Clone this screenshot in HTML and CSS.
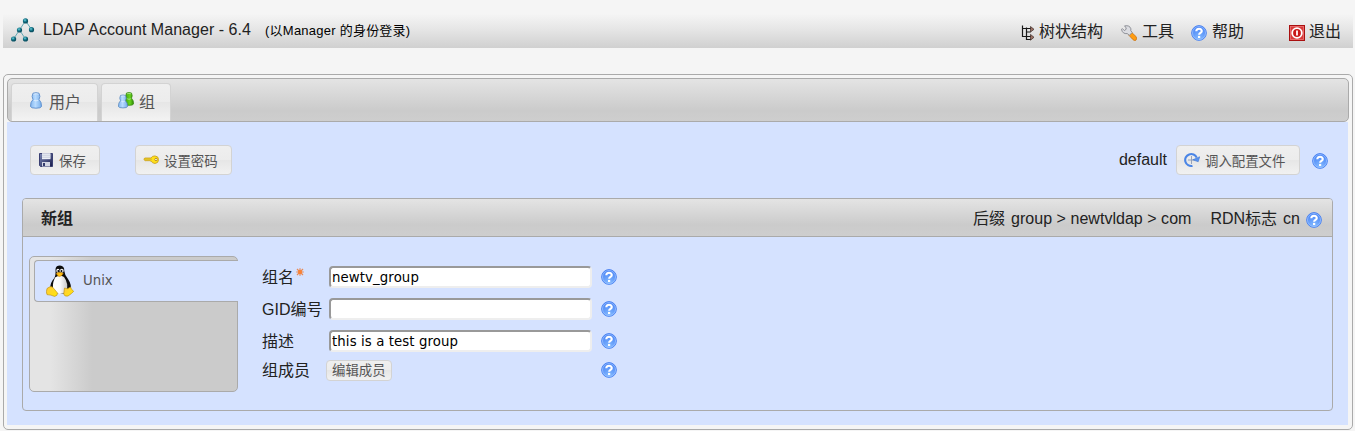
FILE: index.html
```html
<!DOCTYPE html>
<html lang="zh-CN">
<head>
<meta charset="utf-8">
<title>LDAP Account Manager</title>
<link rel="stylesheet" href="styles.css">
</head>
<body>
<svg class="defs" aria-hidden="true">
  <defs>
    <radialGradient id="blueBall" cx="50%" cy="90%" r="85%"><stop offset="0" stop-color="#86bcff"/><stop offset="1" stop-color="#4681f5"/></radialGradient>
    <linearGradient id="bluePawn" x2="1"><stop offset="0" stop-color="#84b7ef"/><stop offset=".45" stop-color="#b8dbff"/><stop offset="1" stop-color="#77aeea"/></linearGradient>
    <linearGradient id="greenPawn" x2="1"><stop offset="0" stop-color="#3f9d0c"/><stop offset=".6" stop-color="#67d51d"/><stop offset="1" stop-color="#318a08"/></linearGradient>
    <radialGradient id="teal" cx="40%" cy="35%"><stop offset="0" stop-color="#7fd0dc"/><stop offset=".5" stop-color="#1d8799"/><stop offset="1" stop-color="#0b5264"/></radialGradient>
    <linearGradient id="foot" y2="1"><stop offset="0" stop-color="#ffc83c"/><stop offset="1" stop-color="#ffe808"/></linearGradient>
    <linearGradient id="belly" x2="1"><stop offset="0" stop-color="#fff"/><stop offset=".5" stop-color="#fafafa"/><stop offset="1" stop-color="#c9c9c9"/></linearGradient>
    <linearGradient id="disk" x2="1" y2="1"><stop offset="0" stop-color="#7b87b4"/><stop offset="1" stop-color="#181b4c"/></linearGradient>
  </defs>
  <symbol id="help" viewBox="0 0 16 16">
    <circle cx="8" cy="8" r="7.4" fill="url(#blueBall)" stroke="#3f7af0" stroke-width=".8"/>
    <circle cx="8" cy="8" r="6.5" fill="none" stroke="#a5c8ff" stroke-width=".7"/>
    <path d="M5.3 6.3C5.2 2.9 10.8 2.9 10.8 6.1C10.8 8 8.2 7.9 8.1 9.8" fill="none" stroke="#fff" stroke-width="2.1"/>
    <rect x="7" y="10.9" width="2.2" height="2.1" fill="#fff"/>
  </symbol>
  <symbol id="pawn" viewBox="0 0 12 17">
    <path d="M3 1.2Q6 .2 9 1.2Q10.8 4.5 9 7.5Q11.7 10 11.5 14.5Q11 16.2 6 16.2Q1 16.2 .5 14.5Q.3 10 3 7.5Q1.2 4.5 3 1.2Z" stroke-width=".9"/>
    <path d="M3.4 2.2Q6 1.2 8.6 2.2M3.8 8.2Q6 9.6 8.2 8.2" fill="none" stroke="#fff" stroke-opacity=".55"/>
  </symbol>
</svg>

<header class="topbar">
  <svg class="logo" viewBox="0 0 24 24">
    <path d="M14.5 2.7L8.5 12L2.5 21M14.5 2.7L20.5 11.5M8.5 12L14.5 21" fill="none" stroke="#64a9b5" stroke-width="1"/>
    <g fill="url(#teal)"><circle cx="14.5" cy="2.9" r="2.6"/><circle cx="8.5" cy="12" r="2.6"/><circle cx="20.5" cy="11.7" r="2.6"/><circle cx="2.6" cy="21" r="2.6"/><circle cx="14.5" cy="21" r="2.6"/></g>
  </svg>
  <span class="product">LDAP Account Manager - 6.4</span>
  <span class="login">(以Manager 的身份登录)</span>
  <nav class="links">
    <a class="link tree"><svg viewBox="0 0 16 16">
      <path d="M2.5 .5V11.5H11M6.5 2.5V14.5H11M2 3.5H11M6.5 7H10.5" fill="none" stroke="#171717" stroke-width="1.2"/>
      <path d="M10.5 1.5L14 4.3L10.5 7.1ZM10.5 9.4L14 12.3L10.5 15.2Z" fill="#9b7063" stroke="#3a2a25" stroke-width=".7"/>
    </svg><span>树状结构</span></a>
    <a class="link tools"><svg viewBox="0 0 16 16">
      <path d="M7.5 9.8L10.2 7L15.2 11.7Q16.3 14.2 14.7 15.4Q13.1 16 11.5 14.2Z" fill="#ff9d12" stroke="#c66a07" stroke-width=".7"/>
      <path d="M3.6 .9Q8.6 -.1 9.9 3.8L9.8 5.8L11.2 7.4L8.3 10.4L6.3 8.6Q1.5 9.2 .5 4.3L1.4 3.6L3.4 5.6L5.2 4.2L5 2.8Z" fill="#dcdde2" stroke="#85878f" stroke-width=".9"/>
    </svg><span>工具</span></a>
    <a class="link help-link"><svg><use href="#help"/></svg><span>帮助</span></a>
    <a class="link exit"><svg viewBox="0 0 16 16">
      <rect x=".5" y=".5" width="15" height="15" fill="#d83a3a" stroke="#a91010"/>
      <rect x="1.5" y="1.5" width="13" height="13" fill="none" stroke="#ec7474" stroke-width=".8"/>
      <circle cx="8" cy="8" r="4.8" fill="#c91818" stroke="#fff" stroke-width="1.8"/>
      <path d="M8 5.4V10.6" stroke="#fff" stroke-width="1.8"/>
    </svg><span>退出</span></a>
  </nav>
</header>

<main class="frame">
  <div class="tabs">
    <a class="tab users"><svg class="pawn-one" fill="url(#bluePawn)" stroke="#5b8ccc"><use href="#pawn"/></svg><span>用户</span></a>
    <a class="tab groups"><svg class="pawns" viewBox="0 0 16 17">
      <use href="#pawn" x="6" y="0" width="10" height="14" fill="url(#greenPawn)" stroke="#2f850b"/>
      <use href="#pawn" x="0" y="2" width="10" height="15" fill="url(#bluePawn)" stroke="#5283bb"/>
    </svg><span>组</span></a>
  </div>

  <div class="content">
    <div class="toolbar">
      <button class="btn save"><svg viewBox="0 0 16 16">
        <path d="M1.5 1.5H14.5V14.5H2.5L1.5 13.5Z" fill="url(#disk)" stroke="#3a4072"/>
        <rect x="4" y="1.2" width="8.5" height="6" fill="#eef1f8"/><path d="M4 3.2H12.5M4 5.2H12.5" stroke="#b8bfd1" stroke-width=".7"/>
        <rect x="4" y="10" width="8" height="4.5" fill="#d3d6e3"/><rect x="5" y="11" width="2" height="3" fill="#353c6d"/>
      </svg><span>保存</span></button>
      <button class="btn password"><svg viewBox="0 0 16 16">
        <path d="M1 6.7L2 6H8Q9 3.8 12 3.9Q15.5 4.2 15.6 7.6Q15.4 11.3 12 11.5Q9.2 11.4 8.2 9H7L6 8.3L5 9L4 8.3L3 9L1 7.8Z" fill="#ffe018" stroke="#c79a18" stroke-width=".8"/>
        <path d="M2 7.2H9" stroke="#b19545" stroke-width=".6"/><circle cx="13" cy="7.5" r="1.2" fill="#fff" stroke="#a47910" stroke-width=".8"/>
      </svg><span>设置密码</span></button>
      <div class="profile">
        <span class="profile-name">default</span>
        <button class="btn load"><svg viewBox="0 0 16 16">
          <path d="M7.5 4V12M4 8H11.5" stroke="#8e9cb4" stroke-width=".9"/>
          <path d="M8.5 13.9A6 6 0 1 1 12.7 5.7" fill="none" stroke="#4a85e6" stroke-width="2.1"/>
          <path d="M8.7 7.8L15.8 4.7L14.2 9.8Z" fill="#5792f0" stroke="#376fca" stroke-width=".5"/>
        </svg><span>调入配置文件</span></button>
        <svg class="help"><use href="#help"/></svg>
      </div>
    </div>

    <section class="panel">
      <div class="panel-head">
        <h1>新组</h1>
        <span class="suffix">后缀</span><span class="dn">group &gt; newtvldap &gt; com</span>
        <span class="rdn">RDN标志</span><span class="cn">cn</span>
        <svg class="help"><use href="#help"/></svg>
      </div>
      <div class="panel-body">
        <div class="modules">
          <a class="module"><svg class="tux" viewBox="0 0 28 32">
            <path d="M9.5 4Q10 .6 14 .6Q18.4 .8 18.3 6Q18.6 10 22 14Q26 20 24.5 25L20 28.5H8L4 23.5Q4.5 17 8 13.5Q10 10.5 9.5 4Z" fill="#0c0c0c"/>
            <path d="M9 12.5Q13.5 9.5 18 12Q22.5 18 20.8 26Q14.5 31.5 8 27Q5.2 21 9 12.5Z" fill="url(#belly)"/>
            <ellipse cx="11.9" cy="5.8" rx="1.6" ry="2" fill="#fff"/><ellipse cx="15.8" cy="5.8" rx="1.9" ry="2" fill="#eee"/>
            <circle cx="12.3" cy="6" r=".9"/><circle cx="15.5" cy="6" r=".9"/>
            <path d="M10.2 8.5Q13.8 5.8 17.3 8.6Q15.7 11.5 13.2 11.6Q11.5 11 10.2 8.5Z" fill="#ffbf14" stroke="#b67500" stroke-width=".5"/>
            <path d="M1 23.5Q4.5 20.5 6.5 22L11.5 28Q11.7 31 8.5 31.4Q5 29.8 1 29.6Q-.2 27 1 23.5Z" fill="url(#foot)" stroke="#b98908" stroke-width=".6"/>
            <path d="M18.5 23Q21 25 24.5 22Q25 24.5 27.7 26.3Q26 28.5 22 31Q18.6 32 17.7 29Z" fill="url(#foot)" stroke="#b98908" stroke-width=".6"/>
          </svg><span>Unix</span></a>
        </div>
        <form class="form">
          <label><span>组名</span><svg class="required" viewBox="0 0 8 8"><path d="M4 .2V7.8M.2 4H7.8M1 1L7 7M7 1L1 7" stroke="#e88a55" stroke-width="1.2"/><circle cx="4" cy="4" r="2" fill="#fa8235"/></svg></label>
          <input type="text" value="newtv_group"><svg class="help"><use href="#help"/></svg>
          <label>GID编号</label><input type="text"><svg class="help"><use href="#help"/></svg>
          <label>描述</label><input type="text" value="this is a test group"><svg class="help"><use href="#help"/></svg>
          <label>组成员</label><button type="button" class="btn edit">编辑成员</button><svg class="help"><use href="#help"/></svg>
        </form>
      </div>
    </section>
  </div>
</main>
</body>
</html>
```
FILE: styles.css
```css
* { box-sizing: border-box; }

body {
  margin: 0;
  height: 431px;
  overflow: hidden;
  padding: 10px 2px 0 3px;
  background: #f5f5f5;
  color: #222;
  font: 16px/20px "Liberation Sans", "Noto Sans CJK SC", sans-serif;
}

svg { display: block; flex: none; width: 16px; height: 16px; }
.defs { position: absolute; width: 0; height: 0; }

.topbar {
  display: flex;
  align-items: flex-start;
  height: 38px;
  padding: 10px 12px 0 8px;
  background: linear-gradient(#f5f5f5 10%, #e6e6e6 50%, #d0d0d0);
}
.logo { width: 24px; height: 24px; margin-top: -2px; }
.product { width: 208px; margin-left: 8px; white-space: nowrap; letter-spacing: .04px; }
.login { margin-left: 14px; font-size: 13px; letter-spacing: .24px; color: #000; padding-top: 1px; }
.links { display: flex; margin-left: auto; padding-top: 2px; }
.link { display: flex; gap: 3px; white-space: nowrap; }
.link svg { margin-top: 3px; }
.tree { margin-right: 18px; }
.tools { margin-right: 17px; }
.tools svg, .help-link svg { margin-right: 2px; }
.exit { margin-left: 45px; }
.exit svg { margin-right: 1px; }
.tree svg { margin-left: -1px; }

.frame {
  height: 356px;
  margin-top: 26px;
  padding: 3px;
  border: 1px solid #aaa;
  border-radius: 5px;
}
.tabs {
  display: flex;
  align-items: flex-end;
  gap: 3px;
  height: 44px;
  padding: 0 3px;
  border: 1px solid #aaa;
  border-radius: 5px;
  background: linear-gradient(#e4e4e4, #cbcbcb 75%, #cecece);
}
.tab {
  display: flex;
  height: 38px;
  border: 1px solid #d3d3d3;
  border-bottom: 0;
  border-radius: 4px 4px 0 0;
  background: linear-gradient(#efefef, #ececec 49%, #e6e6e6 50%, #f3f3f3);
  color: #555;
}
.tab span { margin-top: 9px; }
.users { width: 87px; padding-left: 18px; gap: 7px; }
.groups { width: 70px; padding-left: 16px; gap: 5px; }
.pawn-one { width: 12px; height: 17px; margin-top: 8px; }
.pawns { width: 16px; height: 17px; margin-top: 8px; }

.content {
  height: 303px;
  padding: 23px 15px 0;
  margin-right: 1px;
  background: #d5e2ff;
}
.toolbar { display: flex; height: 30px; padding-left: 8px; }
.btn {
  display: flex;
  align-items: center;
  height: 30px;
  margin: 0;
  padding: 0 0 0 7px;
  border: 1px solid #d3d3d3;
  border-radius: 4px;
  background: linear-gradient(#efefef, #ececec 49%, #e6e6e6 50%, #f1f1f1);
  color: #555;
  font: 13.4px/18px "Liberation Sans", "Noto Sans CJK SC", sans-serif;
  white-space: nowrap;
}
.btn span { margin: 3px 0 0 5px; }
.save { width: 70px; }
.password { width: 97px; margin-left: 35px; }
.load { width: 124px; }
.profile { display: flex; margin-left: auto; padding-right: 5px; }
.profile-name { margin: 5px 9px 0 0; }
.profile .help { margin: 8px 0 0 12px; }

.panel {
  height: 213px;
  margin: 23px 0 0;
  border: 1px solid #aaa;
  border-radius: 4px;
}
.panel-head {
  display: flex;
  height: 38px;
  padding: 10px 10px 0 18px;
  border-bottom: 1px solid #aaa;
  border-radius: 3px 3px 0 0;
  background: linear-gradient(#e4e4e4, #cbcbcb 70%, #cecece);
}
.panel-head h1 { margin: 0 auto 0 0; font-size: 16px; line-height: 20px; }
.dn { margin-left: 6px; letter-spacing: .03px; }
.rdn { margin-left: 19px; }
.cn { margin-left: 6px; }
.panel-head .help { margin: 3px 0 0 6px; }

.panel-body { display: flex; padding: 19px 0 0 6px; }
.modules {
  width: 209px;
  height: 136px;
  padding: 3px 0 0 4px;
  border: 1px solid #aaa;
  border-radius: 5px;
  background: linear-gradient(90deg, #e4e4e4 10%, #cbcbcb 30%);
}
.module {
  display: flex;
  height: 42px;
  margin-right: -1px;
  padding: 3px 0 0 11px;
  border: 1px solid #aaa;
  border-right: 0;
  border-radius: 4px 0 0 4px;
  background: #d5e2ff;
  color: #555;
  font: 13.3px/18px "DejaVu Sans", sans-serif;
}
.tux { width: 28px; height: 32px; margin-top: 1px; }
.module span { margin: 8px 0 0 9px; }

.form {
  display: grid;
  grid-template-columns: 67px 263px 16px;
  grid-template-rows: 32px 32px 32px 26px;
  align-items: center;
  margin: 5px 0 0 24px;
}
.form label { display: flex; white-space: nowrap; padding-top: 1px; }
.required { width: 8px; height: 8px; margin: 0 0 0 2px; }
.form .help { margin-left: 9px; }
.form input {
  width: 263px;
  height: 22px;
  padding: 1px 0 0 1px;
  border: 2px solid;
  border-color: #999 #eee #eee #999;
  border-radius: 4px;
  background: #fff;
  color: #000;
  font: 13.3px/18px "DejaVu Sans", sans-serif;
  letter-spacing: .1px;
}
.edit { width: 66px; height: 21px; margin-left: -3px; padding: 1px 0 0 5px; }
```
